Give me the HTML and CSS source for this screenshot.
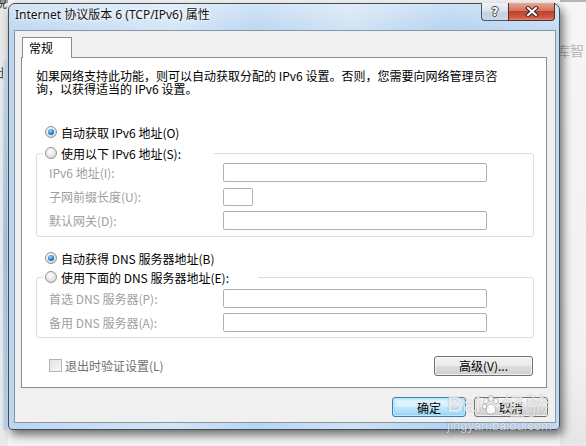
FILE: index.html
```html
<!DOCTYPE html>
<html lang="zh-CN">
<head>
  <meta charset="UTF-8">
  <meta name="viewport" content="width=device-width, initial-scale=1.0">
  <title>Internet 协议版本 6 (TCP/IPv6) 属性</title>
  <link rel="stylesheet" href="styles.css">
</head>
<body>
  <div class="desktop">
    <div class="behind">
      <span class="behind-char top">说</span>
      <span class="behind-char mid">此</span>
      <span class="behind-bar"></span>
    </div>

    <div class="window">
      <div class="titlebar">
        <span class="title">Internet 协议版本 6 (TCP/IPv6) 属性</span>
        <div class="caption-buttons">
          <span class="cap help">?</span>
          <span class="cap close">
            <svg width="14" height="11" viewBox="0 0 14 11">
              <path d="M3 2 L11 9 M11 2 L3 9" stroke="#3b2422" stroke-width="4" stroke-linecap="square" fill="none"/>
              <path d="M3 2 L11 9 M11 2 L3 9" stroke="#ffffff" stroke-width="2" stroke-linecap="square" fill="none"/>
            </svg>
          </span>
        </div>
      </div>

      <div class="client">
        <div class="tabs">
          <div class="tab">常规</div>
        </div>

        <div class="panel">
          <p class="intro">如果网络支持此功能，则可以自动获取分配的 IPv6 设置。否则，您需要向网络管理员咨<br>询，以获得适当的 IPv6 设置。</p>

          <div class="radio-row first">
            <span class="radio on"></span>自动获取 IPv6 地址(O)
          </div>

          <fieldset class="group g1">
            <legend><span class="radio"></span>使用以下 IPv6 地址(S):</legend>
            <div class="fields">
              <span class="lbl">IPv6 地址(I):</span><span class="input"></span>
              <span class="lbl">子网前缀长度(U):</span><span class="input short"></span>
              <span class="lbl">默认网关(D):</span><span class="input"></span>
            </div>
          </fieldset>

          <div class="radio-row second">
            <span class="radio on"></span>自动获得 DNS 服务器地址(B)
          </div>

          <fieldset class="group g2">
            <legend><span class="radio"></span>使用下面的 DNS 服务器地址(E):</legend>
            <div class="fields">
              <span class="lbl">首选 DNS 服务器(P):</span><span class="input"></span>
              <span class="lbl">备用 DNS 服务器(A):</span><span class="input"></span>
            </div>
          </fieldset>

          <div class="bottom-row">
            <div class="check"><span class="box"></span>退出时验证设置(L)</div>
            <span class="btn advanced">高级(V)...</span>
          </div>
        </div>

        <div class="actions">
          <span class="btn default">确定</span>
          <span class="btn">取消</span>
        </div>
      </div>
    </div>

    <div class="side">
      <span class="side-text">库智</span>
    </div>
  </div>

  <div class="watermark">
    <div class="wm-logo">
      <span class="wm-bai">Bai</span>
      <svg class="wm-paw" width="18" height="20" viewBox="0 0 18 20">
        <g fill="#ffffff" stroke="#9a9a9a" stroke-width="0.8">
          <ellipse cx="4" cy="6" rx="2.3" ry="3"/>
          <ellipse cx="9" cy="3.5" rx="2.3" ry="3"/>
          <ellipse cx="14" cy="6" rx="2.3" ry="3"/>
          <ellipse cx="2.5" cy="11.5" rx="2" ry="2.6"/>
          <path d="M9 9 C5 9 3 15 5 18 C7 19.5 11 19.5 13 18 C15 15 13 9 9 9 Z"/>
        </g>
      </svg>
      <span class="wm-cn">经验</span>
    </div>
    <div class="wm-url">jingyan.baidu.com</div>
  </div>
</body>
</html>
```

FILE: styles.css
```css
* {
  margin: 0;
  padding: 0;
  box-sizing: border-box;
}
body {
  width: 586px;
  height: 446px;
  overflow: hidden;
  background: #f3f3f3;
  font-family: "Noto Sans CJK SC", sans-serif;
  font-size: 12px;
  color: #000;
}
.desktop {
  display: flex;
  height: 446px;
}

/* the window behind, on the left */
.behind {
  width: 8px;
  position: relative;
  background: linear-gradient(to bottom, #9c9c9c 0 3px, #e9e9e9 3px);
  overflow: hidden;
}
.behind-bar {
  position: absolute;
  left: 3px;
  top: 60px;
  width: 4px;
  height: 370px;
  background: linear-gradient(to bottom, #cfe3f5, #a9cbee 50%, #c4dcf3);
}
.behind-char {
  position: absolute;
  left: -5px;
  font-size: 12px;
  color: #333;
}
.behind-char.top { top: -6px; }
.behind-char.mid { top: 64px; }

/* window on the right side */
.side {
  flex: 1;
  position: relative;
  background: linear-gradient(to bottom, #b5b5b5 0 2px, #f6f6f6 2px, #f1f1f1 80%, #e6e6e6);
}
.side-text {
  position: absolute;
  left: -4px;
  top: 40px;
  font-size: 14px;
  color: #b9b9b9;
}

/* dialog frame */
.window {
  width: 552px;
  height: 427px;
  margin-top: 3px;
  display: flex;
  flex-direction: column;
  border: 1px solid #3f4f5e;
  border-radius: 7px 7px 4px 4px;
  background:
    linear-gradient(to bottom, rgba(255, 255, 255, 0.35), rgba(255, 255, 255, 0) 30px),
    linear-gradient(to right, #bcd6f0, #d3e5f6 30%, #b9d5f1 45%, #cfe2f5 62%, #b3d1ef 80%, #c2daf2);
  box-shadow: 3px 5px 10px rgba(0, 0, 0, 0.55);
  position: relative;
  z-index: 1;
}
.titlebar {
  height: 26px;
  display: flex;
  align-items: flex-start;
  padding-left: 6px;
}
.title {
  flex: 1;
  padding-top: 3px;
  line-height: 16px;
  font-family: "Noto Sans", "Noto Sans CJK SC", sans-serif;
  font-size: 12px;
  color: #111;
  text-shadow: 0 0 6px #fff, 0 0 3px #fff;
}
.caption-buttons {
  display: flex;
  margin-top: -1px;
  margin-right: 4px;
  height: 18px;
}
.cap {
  display: flex;
  align-items: center;
  justify-content: center;
  height: 18px;
  border: 1px solid #4c5b6b;
  border-top: none;
}
.cap.help {
  width: 27px;
  border-right: none;
  border-radius: 0 0 0 4px;
  background: linear-gradient(to bottom, #eef3f8, #d7e1ea 50%, #c3d0dc 51%, #cdd9e4);
  font-family: "DejaVu Sans", sans-serif;
  font-weight: bold;
  font-size: 12px;
  color: #fff;
  text-shadow: 1px 0 0 #3d4650, -1px 0 0 #3d4650, 0 1px 0 #3d4650, 0 -1px 0 #3d4650;
}
.cap.close {
  width: 47px;
  border-radius: 0 0 4px 0;
  border-color: #5a2a24;
  background: linear-gradient(to bottom, #e8a796, #d47360 45%, #c2412c 50%, #cf5a44 85%, #e28a72);
}

/* client area */
.client {
  flex: 1;
  margin: 0 3px 6px 5px;
  border: 1px solid #8796a4;
  background: #f0f0f0;
  padding: 6px 7px 5px 6px;
  display: flex;
  flex-direction: column;
}
.tabs {
  display: flex;
  height: 20px;
  padding-left: 1px;
}
.tab {
  position: relative;
  z-index: 1;
  width: 50px;
  height: 21px;
  padding-left: 6px;
  line-height: 20px;
  background: #fff;
  border: 1px solid #898c95;
  border-bottom: none;
}
.panel {
  width: 526px;
  height: 331px;
  background: #fff;
  border: 1px solid #898c95;
  padding: 11px 12px 0 14px;
}
.intro {
  line-height: 13px;
  white-space: nowrap;
  height: 26px;
}

/* radios */
.radio-row {
  display: flex;
  align-items: center;
  height: 20px;
  padding-left: 9px;
}
.radio-row.first { margin-top: 27px; }
.radio-row.second { margin-top: 11px; }
.radio {
  width: 12px;
  height: 12px;
  margin-right: 4px;
  border-radius: 50%;
  border: 1px solid #939393;
  background: radial-gradient(circle at 40% 35%, #ffffff, #e4e4e4 55%, #c9c9c9);
  display: flex;
  align-items: center;
  justify-content: center;
  flex: none;
}
.radio.on::after {
  content: "";
  width: 6px;
  height: 6px;
  border-radius: 50%;
  background: radial-gradient(circle at 40% 35%, #9fdcff, #2a87d6 50%, #0c3f7c);
}

/* group boxes */
.group {
  width: 498px;
  border: 1px solid #d5dfe5;
  border-radius: 3px;
  padding: 0;
}
.group.g1 { margin-top: 2px; }
.group legend {
  display: flex;
  align-items: center;
  height: 18px;
  margin-left: 6px;
  padding: 0 2px;
}
.g1 legend { width: 171px; }
.g2 legend { width: 215px; }
.fields {
  display: grid;
  grid-template-columns: 174px 264px;
  grid-auto-rows: 19px;
  row-gap: 5px;
  align-items: center;
  padding: 1px 12px 6px 12px;
}
.g2 .fields { padding: 3px 12px 5px 12px; }
.lbl {
  color: #a0a0a0;
}
.input {
  display: block;
  height: 19px;
  background: #fff;
  border: 1px solid #b0b0b0;
  border-radius: 2px;
}
.input.short {
  width: 30px;
  height: 18px;
}

/* bottom of the tab page */
.bottom-row {
  display: flex;
  align-items: center;
  justify-content: space-between;
  width: 497px;
  height: 21px;
  margin-top: 17px;
  padding-left: 13px;
}
.check {
  display: flex;
  align-items: center;
  color: #707070;
}
.box {
  width: 13px;
  height: 13px;
  margin-right: 3px;
  border: 1px solid #b5b5b5;
  background: linear-gradient(135deg, #e3e3e3, #f7f7f7);
}
.btn {
  display: flex;
  align-items: center;
  justify-content: center;
  width: 74px;
  height: 20px;
  border: 1px solid #707070;
  border-radius: 3px;
  background: linear-gradient(to bottom, #f2f2f2, #ebebeb 48%, #dddddd 52%, #cfcfcf);
  box-shadow: inset 0 0 0 1px rgba(255, 255, 255, 0.7);
}
.btn.advanced {
  width: 99px;
  height: 20px;
}
.btn.default {
  border-color: #3c7fb1;
  background: linear-gradient(to bottom, #eaf6fd, #d9f0fc 48%, #bee6fd 52%, #a7d9f5);
  box-shadow: inset 0 0 0 1px #bfeafd, inset 0 0 2px 2px rgba(72, 209, 255, 0.35);
}
.actions {
  display: flex;
  justify-content: flex-end;
  gap: 8px;
  margin-top: 9px;
}

/* watermark stamped on the screenshot */
.watermark {
  position: absolute;
  left: 447px;
  top: 391px;
  z-index: 2;
  color: rgba(255, 255, 255, 0.85);
  text-shadow: 0 0 1px rgba(0, 0, 0, 0.45);
  opacity: 0.85;
}
.wm-logo {
  display: flex;
  align-items: center;
  height: 28px;
}
.wm-bai {
  font-family: "Liberation Sans", sans-serif;
  font-weight: bold;
  font-size: 22px;
}
.wm-paw {
  margin: 0 1px;
}
.wm-cn {
  font-size: 24px;
  line-height: 28px;
}
.wm-url {
  font-family: "Liberation Sans", sans-serif;
  font-size: 13px;
  line-height: 14px;
}
```
